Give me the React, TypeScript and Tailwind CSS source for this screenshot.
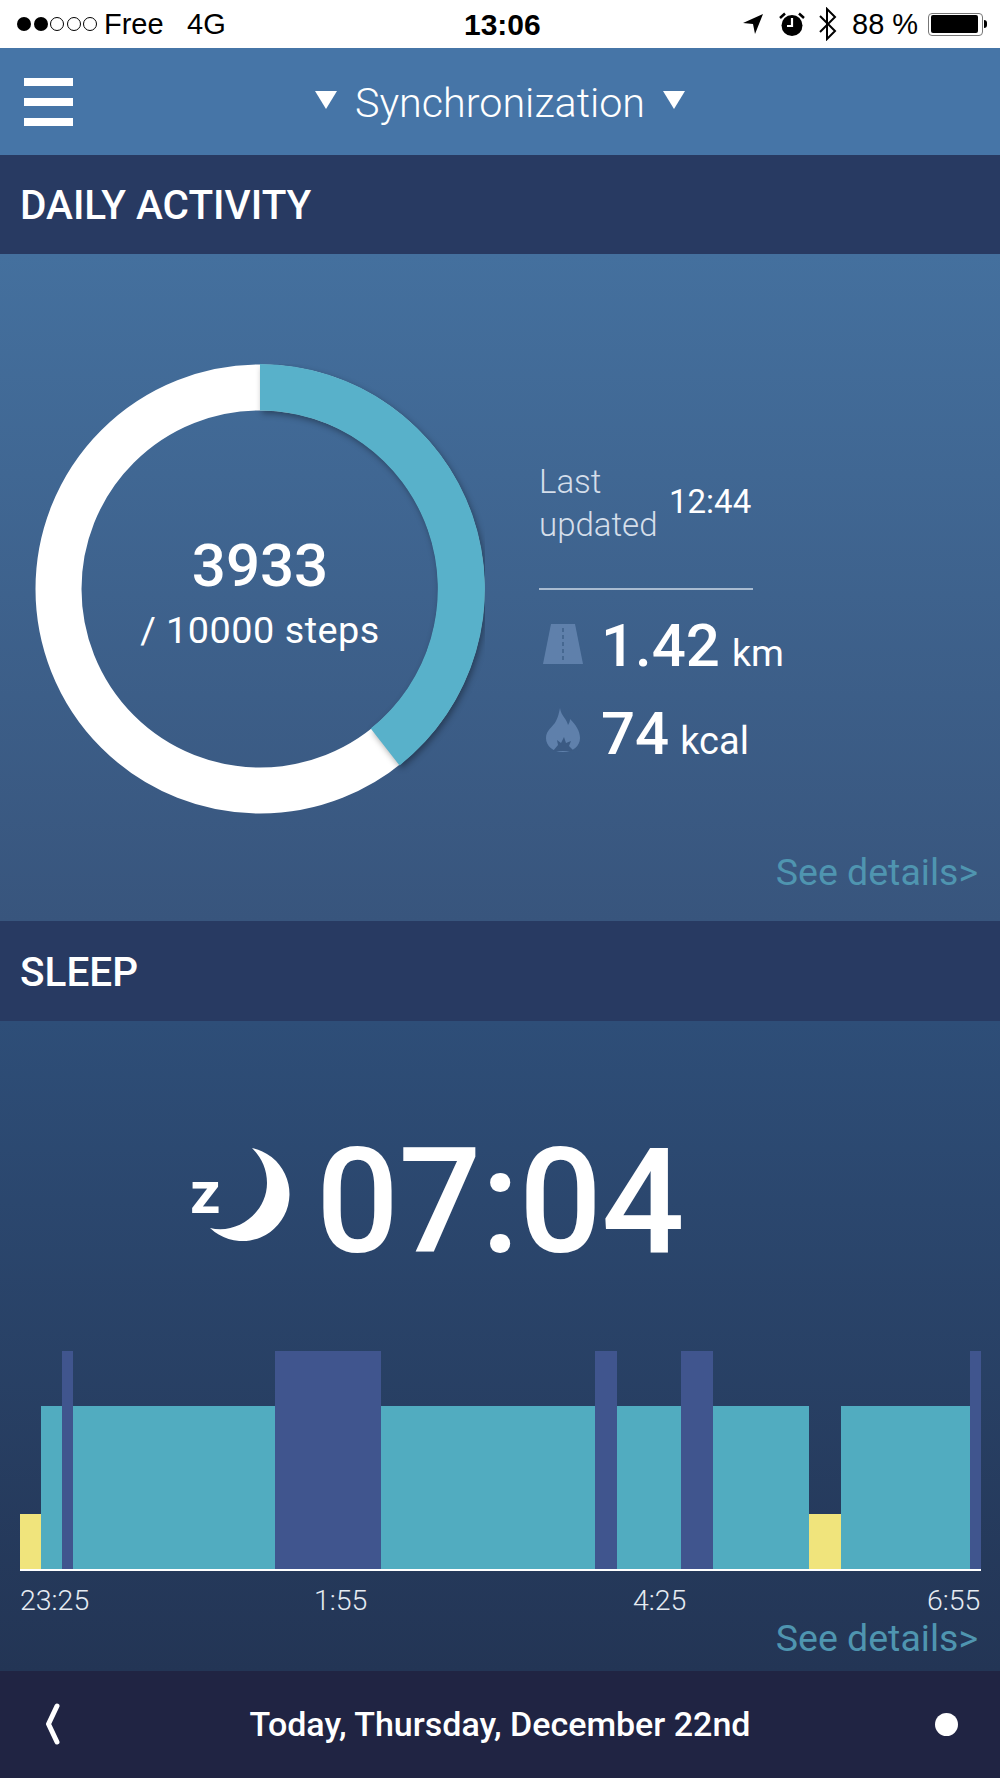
const segments = [
  { w: 21.5, h: 55, color: 'bg-[#f0e47c]' },
  { w: 21, h: 163, color: 'bg-[#51acc0]' },
  { w: 11, h: 218, color: 'bg-[#40558e]' },
  { w: 202, h: 163, color: 'bg-[#51acc0]' },
  { w: 106, h: 218, color: 'bg-[#40558e]' },
  { w: 214, h: 163, color: 'bg-[#51acc0]' },
  { w: 22, h: 218, color: 'bg-[#40558e]' },
  { w: 64, h: 163, color: 'bg-[#51acc0]' },
  { w: 32, h: 218, color: 'bg-[#40558e]' },
  { w: 96, h: 163, color: 'bg-[#51acc0]' },
  { w: 32, h: 55, color: 'bg-[#f0e47c]' },
  { w: 129, h: 163, color: 'bg-[#51acc0]' },
  { w: 11, h: 218, color: 'bg-[#40558e]' },
];

function StatusBar() {
  return (
    <div className="flex h-[48px] items-center bg-white pl-[17px] pr-[13px] font-['Liberation_Sans',sans-serif] text-[29px] text-black">
      <div className="flex w-[87px] gap-[2.5px]">
        {[0, 1, 2, 3, 4].map(i => (
          <span key={i} className={i < 2 ? 'h-[14px] w-[14px] rounded-full bg-black' : 'h-[14px] w-[14px] rounded-full border border-black'} />
        ))}
      </div>
      <span className="mt-[2px] w-[83px]">Free</span>
      <span className="mt-[2px] w-[277px]">4G</span>
      <span className="w-[279px] text-[30px] font-bold">13:06</span>
      <svg width="20" height="20" viewBox="0 0 20 20" className="mr-[16px]">
        <path d="M0 9 L20 0 L12 20 L10 10 Z" fill="#000" />
      </svg>
      <svg width="26" height="24" viewBox="0 0 26 24" className="mr-[13px]">
        <circle cx="13" cy="13.5" r="10.5" fill="#000" />
        <path d="M13 6 V14 H8" stroke="#fff" strokeWidth="2.2" fill="none" />
        <path d="M1 6 L6 1.5 M25 6 L20 1.5" stroke="#000" strokeWidth="2.5" />
      </svg>
      <svg width="19" height="34" viewBox="0 0 19 34" className="mr-[15px]">
        <path d="M2 9 L17 24 L9 32 V2 L17 10 L2 25" stroke="#000" strokeWidth="2" fill="none" />
      </svg>
      <span className="mt-[2px] w-[76px]">88 %</span>
      <div className="h-[23px] w-[55px] rounded-[4px] border border-[#777] p-[1.5px]">
        <div className="h-full w-[47px] rounded-[2px] bg-black" />
      </div>
      <span className="ml-[1px] h-[8px] w-[3px] rounded-r-full bg-black" />
    </div>
  );
}

function TopBar() {
  return (
    <div className="relative flex h-[107px] items-center justify-center bg-[#4675a7] font-['Roboto',sans-serif] text-white">
      <div className="absolute left-[24px] top-[30px] flex w-[49px] flex-col gap-[12px]">
        <span className="h-[8px] bg-white" />
        <span className="h-[8px] bg-white" />
        <span className="h-[8px] bg-white" />
      </div>
      <span className="mt-[-4px] h-0 w-0 border-x-[11px] border-t-[18px] border-x-transparent border-t-white" />
      <span className="mx-[18px] mt-[4px] text-[41.3px] font-light leading-none">Synchronization</span>
      <span className="mt-[-4px] h-0 w-0 border-x-[11px] border-t-[18px] border-x-transparent border-t-white" />
    </div>
  );
}

function SectionBar({ title, short }: { title: string; short?: boolean }) {
  return (
    <div className={`flex items-center bg-[#283a62] pl-[20px] pt-[2px] text-[40.5px] font-medium leading-none text-white ${short ? 'h-[100px]' : 'h-[99px]'}`}>
      {title}
    </div>
  );
}

function StepsRing() {
  return (
    <div className="relative h-[450px] w-[450px]">
      <svg width="450" height="450" viewBox="0 0 450 450">
        <circle cx="225" cy="225" r="201.5" fill="none" stroke="#ffffff" strokeWidth="46" />
        <path
          d="M225 0 A225 225 0 0 1 364.6 401.4 L335.7 364.5 A178.5 178.5 0 0 0 225 46.5 Z"
          fill="#58b1ca"
          className="drop-shadow-[2px_3px_3px_rgba(0,0,0,0.35)]"
        />
      </svg>
      <div className="absolute inset-0 flex flex-col items-center pt-[167px] text-white">
        <span className="text-[60px] font-medium leading-[70px]">3933</span>
        <span className="mt-[7px] text-[37.8px] leading-[44px] tracking-[0.5px]">/ 10000 steps</span>
      </div>
    </div>
  );
}

function Flame() {
  return (
    <svg width="34" height="44" viewBox="0 0 34 44">
      <path
        d="M14 0 C15 8 21 11 22 17 C24 14 24 12 24 11 C30 17 34 23 34 30 C34 38 27 44 17 44 C7 44 0 38 0 30 C0 22 7 19 10 13 C12 9 13 5 14 0 Z"
        fill="#5f80ab"
      />
      <path d="M7 43 L12 37 L11 32 L15 35 L18 29 L20 35 L25 33 L23 38 L28 43 Z" fill="#3b5a83" />
    </svg>
  );
}

function DailyActivity() {
  return (
    <div className="flex h-[667px] flex-col bg-gradient-to-b from-[#44709e] to-[#38557d] pt-[110px] text-white">
      <div className="flex h-[450px]">
        <div className="ml-[35px]">
          <StepsRing />
        </div>
        <div className="ml-[54px] flex w-[270px] flex-col">
          <div className="mt-[96px] flex items-center">
            <span className="w-[130px] text-[33px] font-light leading-[43px] text-[#d5deea]">
              Last
              <br />
              updated
            </span>
            <span className="mt-[-4px] text-[33px] leading-none">12:44</span>
          </div>
          <div className="mt-[42px] h-[2px] w-[214px] bg-[#a9bbd0]" />
          <div className="mt-[21px] flex items-baseline">
            <svg width="40" height="40" viewBox="0 0 40 40" className="ml-[4px] mr-[18px] mt-[-4px] self-center">
              <path d="M8 0 H32 L40 40 H0 Z" fill="#5f80ab" />
              <path d="M20 4 V36" stroke="#3f6089" strokeWidth="1.5" strokeDasharray="4 3" />
            </svg>
            <span className="text-[60px] font-medium leading-[70px]">1.42</span>
            <span className="ml-[12px] text-[37.5px] leading-none">km</span>
          </div>
          <div className="mt-[18px] flex items-baseline">
            <span className="ml-[7px] mr-[21px] mt-[-8px] self-center">
              <Flame />
            </span>
            <span className="text-[60px] font-medium leading-[70px]">74</span>
            <span className="ml-[11px] text-[38px] leading-none">kcal</span>
          </div>
        </div>
      </div>
      <div className="mt-[37px] pr-[22px] text-right text-[37.5px] leading-[42px] text-[#4f95b0]">See details&gt;</div>
    </div>
  );
}

function Moon() {
  return (
    <svg width="84" height="96" viewBox="0 0 84 96">
      <path d="M45 1 A47 47 0 1 1 3 81 C30 88 60 66 60 36 C60 22 54 10 45 1 Z" fill="#fff" />
    </svg>
  );
}

function Sleep() {
  return (
    <div className="flex h-[650px] flex-col bg-gradient-to-b from-[#2e4e78] to-[#233555] pt-[116px] text-white">
      <div className="flex h-[116px] items-center">
        <span className="ml-[190px] mt-[-4px] w-[17px] text-[60px] font-bold leading-none">z</span>
        <Moon />
        <span className="ml-[25px] mt-[16px] text-[146px] font-medium leading-none tracking-[-0.5px]">07:04</span>
      </div>
      <div className="mx-[19.5px] mt-[98px] flex h-[220px] items-end border-b-2 border-white">
        {segments.map((s, i) => (
          <div key={i} className={s.color} style={{ width: s.w, height: s.h }} />
        ))}
      </div>
      <div className="mt-[13px] flex text-[28.5px] font-light leading-[34px] text-[#e6ebf2]">
        <span className="ml-[20px] w-[294px]">23:25</span>
        <span className="w-[319px]">1:55</span>
        <span className="w-[294px]">4:25</span>
        <span>6:55</span>
      </div>
      <div className="mt-[-1px] pr-[22px] text-right text-[37.5px] leading-[42px] text-[#4f95b0]">See details&gt;</div>
    </div>
  );
}

function Footer() {
  return (
    <div className="relative flex h-[107px] items-center justify-center bg-[#202443] text-[34px] font-medium text-white">
      <svg width="16" height="42" viewBox="0 0 16 42" className="absolute left-[45px] top-[32px]">
        <path d="M12 3 L3.5 21 L12 39" stroke="#fff" strokeWidth="5" fill="none" strokeLinecap="round" strokeLinejoin="round" />
      </svg>
      Today, Thursday, December 22nd
      <span className="absolute left-[935px] top-[42px] h-[23px] w-[23px] rounded-full bg-white" />
    </div>
  );
}

export default function App() {
  return (
    <div className="flex h-[1778px] w-[1000px] flex-col font-['Roboto',sans-serif]">
      <StatusBar />
      <TopBar />
      <SectionBar title="DAILY ACTIVITY" />
      <DailyActivity />
      <SectionBar title="SLEEP" short />
      <Sleep />
      <Footer />
    </div>
  );
}
